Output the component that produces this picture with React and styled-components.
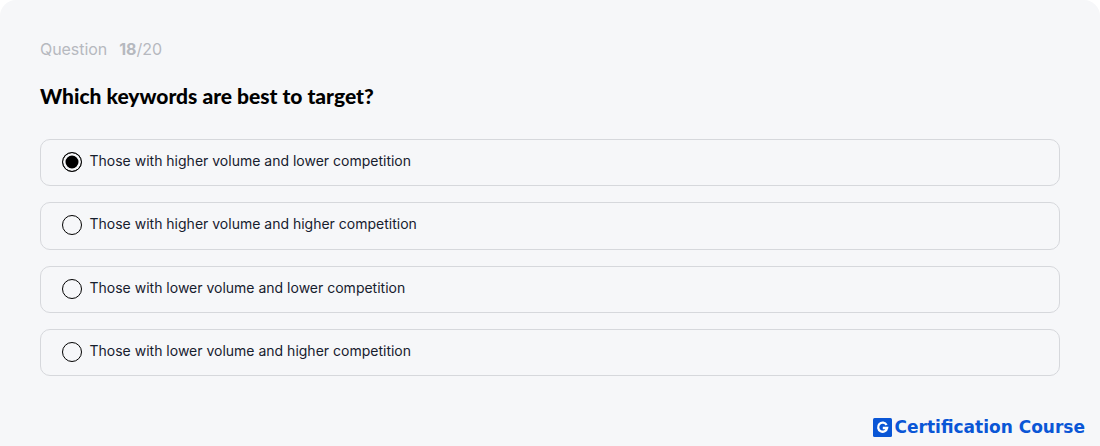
import styled, { createGlobalStyle } from 'styled-components'

const options = [
  'Those with higher volume and lower competition',
  'Those with higher volume and higher competition',
  'Those with lower volume and lower competition',
  'Those with lower volume and higher competition',
]

function App() {
  return (
    <>
      <GlobalStyle />
      <Card>
        <Counter>
          <span>Question</span>
          <span><b>18</b>/20</span>
        </Counter>
        <Title>Which keywords are best to target?</Title>
        <Options>
          {options.map((text, i) => (
            <Option key={text}>
              <Radio $checked={i === 0} />
              <span>{text}</span>
            </Option>
          ))}
        </Options>
        <Brand>
          <svg width="19" height="19" viewBox="0 0 19 19">
            <rect width="19" height="19" rx="1.5" fill="#0a56d6" />
            <path d="M13.6 7a4.5 4.5 0 1 0 .5 3H9.8" fill="none" stroke="#fff" strokeWidth="2.3" />
          </svg>
          <span>Certification Course</span>
        </Brand>
      </Card>
    </>
  )
}

export default App

const GlobalStyle = createGlobalStyle`
  html, body {
    margin: 0;
    background: #fff;
  }
`

const Card = styled.div`
  box-sizing: border-box;
  width: 1100px;
  height: 446px;
  padding: 40px 40px 0;
  display: flex;
  flex-direction: column;
  background: #f6f7f9;
  border-radius: 16px 16px 0 0;
  font-family: Inter, "Liberation Sans", sans-serif;
`

const Counter = styled.div`
  display: flex;
  gap: 12px;
  height: 19px;
  line-height: 19px;
  font-size: 16px;
  letter-spacing: -0.05px;
  color: #b6b9bf;

  b {
    font-weight: 700;
  }
`

const Title = styled.h2`
  margin: 18px 0 0;
  height: 38px;
  line-height: 38px;
  font-family: Lato, "Liberation Sans", sans-serif;
  font-size: 21px;
  font-weight: 900;
  color: #000;
`

const Options = styled.div`
  margin-top: 24px;
  display: flex;
  flex-direction: column;
  gap: 16px;
`

const Option = styled.div`
  box-sizing: border-box;
  height: 47.33px;
  padding: 0 20.5px 1px;
  display: flex;
  align-items: center;
  gap: 7.5px;
  border: 1px solid #d6d8dc;
  border-radius: 10px;
  font-size: 14px;
  color: #16202e;

  span:last-child {
    margin-top: -3px;
  }
`

const Radio = styled.span`
  box-sizing: border-box;
  flex: none;
  width: 20px;
  height: 20px;
  margin-left: 0.5px;
  border: 1.5px solid #000;
  border-radius: 50%;
  background: ${p => (p.$checked ? '#000' : 'transparent')};
  box-shadow: ${p => (p.$checked ? 'inset 0 0 0 2.5px #f6f7f9' : 'none')};
`

const Brand = styled.div`
  margin: auto -25px 9px 0;
  align-self: flex-end;
  display: flex;
  align-items: center;
  gap: 3px;
  line-height: 19px;
  font-family: "DejaVu Sans", sans-serif;
  font-size: 17px;
  font-weight: 700;
  color: #0a56d6;
`
